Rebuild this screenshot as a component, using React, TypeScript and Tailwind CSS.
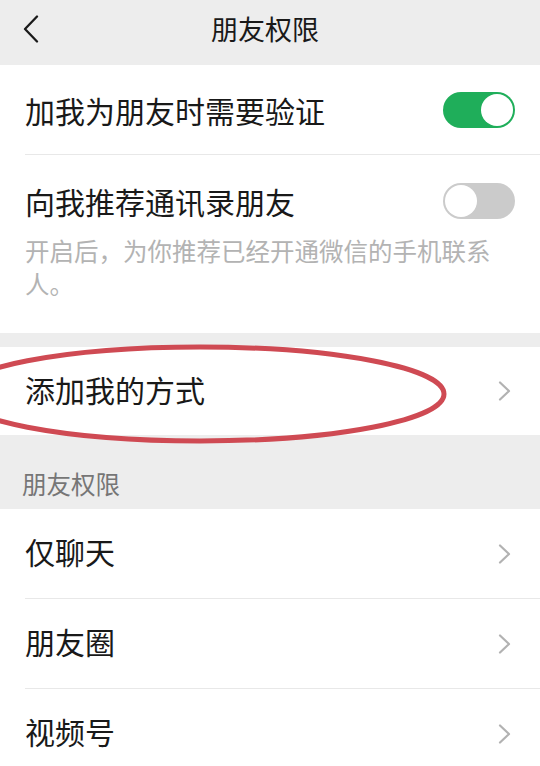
import React from "react";

const font = { fontFamily: '"Noto Sans CJK SC", "Noto Sans", sans-serif' };

function ChevronRight() {
  return (
    <svg width="14" height="20" viewBox="0 0 14 20" fill="none">
      <path d="M2 1.5 L11 10 L2 18.5" stroke="#b2b2b2" strokeWidth="2.2" strokeLinecap="round" strokeLinejoin="round" />
    </svg>
  );
}

function Toggle({ on }: { on: boolean }) {
  return on ? (
    <div className="w-[72px] h-[36px] rounded-full bg-[#1fae5a] flex items-center justify-end px-[2px] shrink-0">
      <div className="w-[32px] h-[32px] rounded-full bg-white" />
    </div>
  ) : (
    <div className="w-[72px] h-[36px] rounded-full bg-[#cbcbcb] flex items-center justify-start px-[2px] shrink-0">
      <div className="w-[32px] h-[32px] rounded-full bg-white" />
    </div>
  );
}

function NavRow({ label, divider, h }: { label: string; divider?: boolean; h?: string }) {
  return (
    <div className="bg-white">
      <div className={`${h ?? "h-[89px]"} flex items-center justify-between pl-[25px] pr-[28px]`}>
        <span className="text-[30px] leading-[40px] text-[#191919] pb-[5px]">{label}</span>
        <ChevronRight />
      </div>
      {divider && <div className="ml-[25px] h-px bg-[#e8e8e8]" />}
    </div>
  );
}

export default function App() {
  return (
    <div className="relative w-[540px] h-[766px] overflow-hidden bg-[#ededed]" style={font}>
      {/* Header */}
      <div className="relative h-[65px] flex items-center pb-[7px] bg-[#ededed]">
        <div className="pl-[22px] flex items-center">
          <svg width="18" height="28" viewBox="0 0 18 28" fill="none">
            <path d="M15 1.5 L3 14 L15 26.5" stroke="#1a1a1a" strokeWidth="2.3" strokeLinecap="round" strokeLinejoin="round" />
          </svg>
        </div>
        <div className="absolute left-0 right-0 top-0 h-[58px] flex items-center justify-center pointer-events-none">
          <span className="text-[27px] leading-[36px] text-[#191919] pr-[10px]">朋友权限</span>
        </div>
      </div>

      {/* Section 1 */}
      <div className="bg-white">
        <div className="h-[89px] flex items-center justify-between pl-[25px] pr-[25px]">
          <span className="text-[30px] leading-[40px] text-[#191919]">加我为朋友时需要验证</span>
          <Toggle on />
        </div>
        <div className="ml-[25px] h-px bg-[#e8e8e8]" />
        <div className="pl-[25px] pr-[25px] pt-[25px] pb-[33px]">
          <div className="flex items-center justify-between h-[42px]">
            <span className="text-[30px] leading-[42px] text-[#191919]">向我推荐通讯录朋友</span>
            <Toggle on={false} />
          </div>
          <p className="mt-[12px] pr-[18px] text-[24.5px] leading-[33px] text-[#b3b3b3]">
            开启后，为你推荐已经开通微信的手机联系人。
          </p>
        </div>
      </div>

      {/* Gap */}
      <div className="h-[14px]" />

      <NavRow label="添加我的方式" h="h-[88px]" />

      {/* Section header */}
      <div className="h-[74px] pl-[22px] pt-[32px]">
        <span className="text-[24.5px] leading-[34px] text-[#767676]">朋友权限</span>
      </div>

      <NavRow label="仅聊天" divider />
      <NavRow label="朋友圈" divider />
      <NavRow label="视频号" />

      {/* Red annotation ellipse */}
      <svg className="absolute left-0 top-0 pointer-events-none" width="540" height="766" viewBox="0 0 540 766">
        <ellipse cx="200" cy="394" rx="244" ry="47" fill="none" stroke="#cf4a53" strokeWidth="5" />
      </svg>
    </div>
  );
}
